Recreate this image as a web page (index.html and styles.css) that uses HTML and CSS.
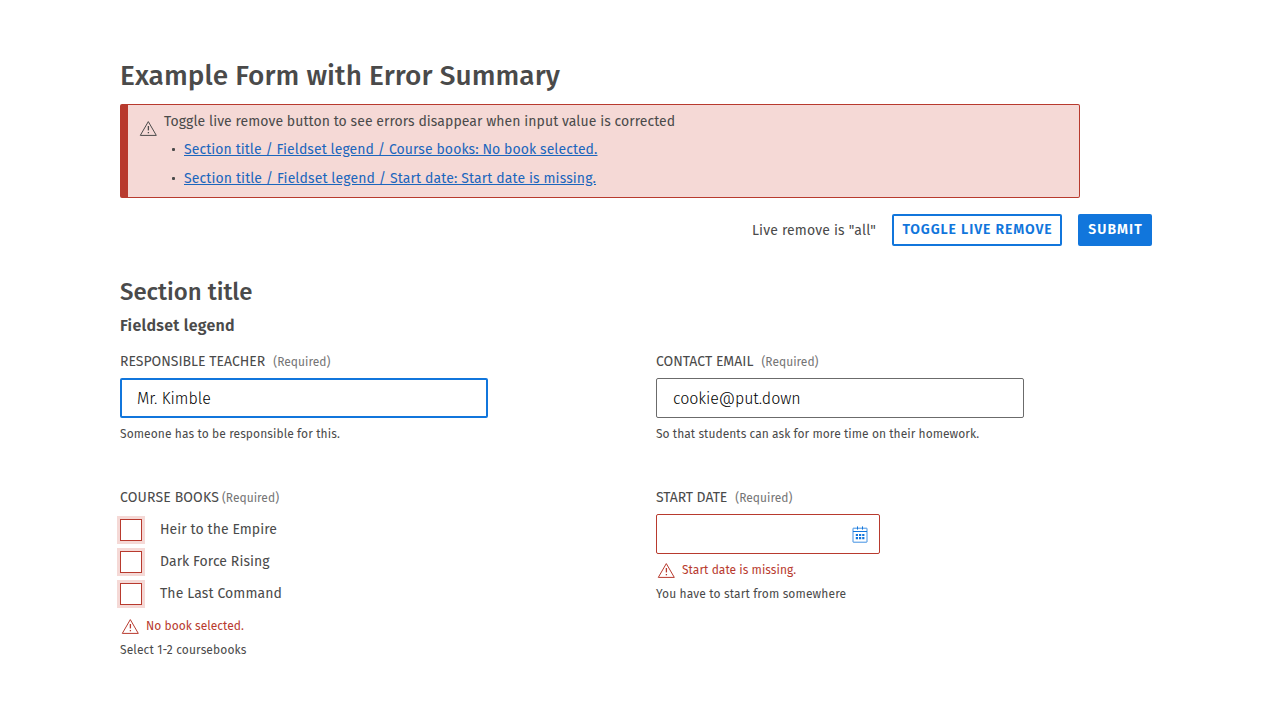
FILE: index.html
```html
<!DOCTYPE html>
<html lang="en">
<head>
<meta charset="utf-8">
<title>Example Form with Error Summary</title>
<link rel="stylesheet" href="styles.css">
</head>
<body>
<svg class="sprite" aria-hidden="true">
  <symbol id="warning" viewBox="0 0 20 20">
    <path d="M10.3 3.6 L18.3 17.4 H2.3 Z" fill="none" stroke="currentColor" stroke-width="1" stroke-linejoin="round"/>
    <path d="M10.4 8v4.4" stroke="currentColor" stroke-width="1.3"/>
    <path d="M10.4 14v1.3" stroke="currentColor" stroke-width="1.3"/>
  </symbol>
</svg>
<form class="page">
  <h1 class="title">Example Form with Error Summary</h1>
  <div class="summary">
    <svg class="icon summary-icon"><use href="#warning"/></svg>
    <div class="summary-body">
      <p class="summary-text">Toggle live remove button to see errors disappear when input value is corrected</p>
      <ul class="errors">
        <li class="errors-item"><a class="link link-books" href="#books">Section title / Fieldset legend / Course books: No book selected.</a></li>
        <li class="errors-item"><a class="link link-date" href="#date">Section title / Fieldset legend / Start date: Start date is missing.</a></li>
      </ul>
    </div>
  </div>
  <div class="actions">
    <span class="status">Live remove is "all"</span>
    <button class="btn btn-secondary" type="button">TOGGLE LIVE REMOVE</button>
    <button class="btn btn-primary" type="button">SUBMIT</button>
  </div>
  <h2 class="section-title">Section title</h2>
  <h3 class="legend">Fieldset legend</h3>
  <div class="grid">
    <div class="field">
      <div class="label-row"><label class="label" for="teacher">RESPONSIBLE TEACHER</label><span class="required">(Required)</span></div>
      <input class="input input-focus" id="teacher" type="text" value="Mr. Kimble">
      <p class="help help-wide">Someone has to be responsible for this.</p>
    </div>
    <div class="field">
      <div class="label-row"><label class="label" for="email">CONTACT EMAIL</label><span class="required">(Required)</span></div>
      <input class="input" id="email" type="text" value="cookie@put.down">
      <p class="help">So that students can ask for more time on their homework.</p>
    </div>
    <div class="field" id="books">
      <div class="label-row label-row-tight"><span class="label label-wide">COURSE BOOKS</span><span class="required">(Required)</span></div>
      <div class="checks">
        <label class="check"><input class="box" type="checkbox"><span>Heir to the Empire</span></label>
        <label class="check"><input class="box" type="checkbox"><span>Dark Force Rising</span></label>
        <label class="check"><input class="box" type="checkbox"><span>The Last Command</span></label>
      </div>
      <p class="error"><svg class="icon"><use href="#warning"/></svg>No book selected.</p>
      <p class="help help-after">Select 1-2 coursebooks</p>
    </div>
    <div class="field">
      <div class="label-row"><label class="label label-narrow" for="date">START DATE</label><span class="required">(Required)</span></div>
      <div class="date">
        <input class="date-input" id="date" type="text">
        <svg class="calendar" viewBox="0 0 16 18" aria-hidden="true">
          <g fill="none" stroke="currentColor">
            <rect x="1" y="3.2" width="14" height="14" rx=".4" stroke-opacity=".8"/>
            <path d="M1 6.5h14M5.5 1.4v3.2M10.5 1.4v3.2"/>
          </g>
          <path fill="currentColor" d="M3.8 9h2.2v2H3.8zM7 9h2.2v2H7zM10.2 9h2.2v2h-2.2zM3.8 12.1h2.2v2.1H3.8zM7 12.1h2.2v2.1H7zM10.2 12.1h2.2v2.1h-2.2z"/>
        </svg>
      </div>
      <p class="error error-date"><svg class="icon"><use href="#warning"/></svg>Start date is missing.</p>
      <p class="help help-after">You have to start from somewhere</p>
    </div>
  </div>
</form>
</body>
</html>
```
FILE: styles.css
```css
* { box-sizing: border-box; }
body { margin: 0; background: #fff; color: #4a4a4a; font: 14px/20px "Fira Sans", "Noto Sans", sans-serif; overflow: hidden; }
h1, h2, h3, p, ul { margin: 0; padding: 0; }
.sprite { position: absolute; width: 0; height: 0; }
.page { width: 1032px; margin-left: 120px; padding-top: 58px; }
.title { font-size: 28px; line-height: 36px; font-weight: 500; letter-spacing: .07px; margin-bottom: 10px; }
.summary { display: flex; width: 960px; height: 94px; padding: 7px 10px 0; background: #f5d9d6; border: 1px solid #b83a2e; border-left-width: 8px; border-radius: 2px; }
.icon { flex: none; width: 20px; height: 20px; }
.summary-icon { margin: 6px 6px 0 0; }
.summary-text { letter-spacing: .06px; margin-bottom: 8px; }
.errors { display: flex; flex-direction: column; gap: 9px; list-style: none; }
.errors-item { display: flex; align-items: center; }
.errors-item::before { content: ""; width: 3px; height: 3px; margin: 0 9px 1px 8px; border-radius: 1px; background: #4a4a4a; }
.link { color: #1b66bd; text-decoration: underline; }
.link-books { letter-spacing: .08px; }
.link-date { letter-spacing: .11px; }
.actions { display: flex; justify-content: flex-end; align-items: center; height: 32px; gap: 16px; margin-top: 16px; }
.status { padding-top: 2px; letter-spacing: .17px; }
.btn { height: 32px; padding: 0; border: 2px solid #1176dc; border-radius: 2px; font: 600 14px/20px "Fira Sans", "Noto Sans", sans-serif; white-space: nowrap; }
.btn-secondary { width: 170px; padding-left: 1px; background: #fff; color: #1176dc; letter-spacing: .88px; }
.btn-primary { width: 74px; padding-left: 1px; background: #1176dc; color: #fff; letter-spacing: 1.05px; }
.section-title { margin-top: 30px; font-size: 24px; line-height: 32px; font-weight: 500; }
.legend { margin-top: 8px; font-size: 16px; line-height: 20px; font-weight: 600; letter-spacing: .27px; }
.grid { display: grid; grid-template-columns: 496px 496px; column-gap: 40px; grid-template-rows: 136px auto; margin-top: 16px; }
.label-row { display: flex; align-items: baseline; gap: 8px; height: 20px; }
.label-row-tight { gap: 3px; }
.label-wide { letter-spacing: .13px; }
.label-narrow { letter-spacing: -.07px; }
.required { font-size: 12px; color: #757575; letter-spacing: .02px; }
.input { display: block; width: 368px; height: 40px; margin-top: 6px; padding: 0 16px; border: 1px solid #6b6b6b; border-radius: 2px; background: #fff; color: #000; font: 300 16px/24px "Fira Sans", "Noto Sans", sans-serif; letter-spacing: -.08px; outline: 0; }
.input-focus { border: 2px solid #1176dc; padding: 0 15px; letter-spacing: 0; }
.help { margin-top: 8px; font-size: 12px; line-height: 16px; letter-spacing: .04px; }
.help-wide { letter-spacing: .09px; }
.help-after { margin-top: 6px; letter-spacing: .13px; }
.checks { display: flex; flex-direction: column; gap: 12px; margin-top: 11px; }
.check { display: flex; align-items: flex-start; gap: 18px; height: 20px; letter-spacing: .07px; }
.check:last-child { letter-spacing: .11px; }
.check span { padding-top: 1px; }
.box { appearance: none; flex: none; width: 22px; height: 22px; margin: 0; border: 1px solid #b83a2e; background: #fff; box-shadow: 0 0 0 3px #f5d9d6; }
.error { display: flex; align-items: center; gap: 6px; height: 20px; margin-top: 13px; font-size: 12px; color: #b83a2e; letter-spacing: .03px; }
.error-date { margin-top: 6px; }
.date { display: flex; align-items: center; width: 224px; height: 40px; margin-top: 6px; padding: 0 11px 0 15px; border: 1px solid #b83a2e; border-radius: 2px; }
.date-input { flex: 1; min-width: 0; border: 0; outline: 0; padding: 0; font: 300 16px/24px "Fira Sans", "Noto Sans", sans-serif; }
.calendar { flex: none; width: 16px; height: 18px; color: #1176dc; }
```
